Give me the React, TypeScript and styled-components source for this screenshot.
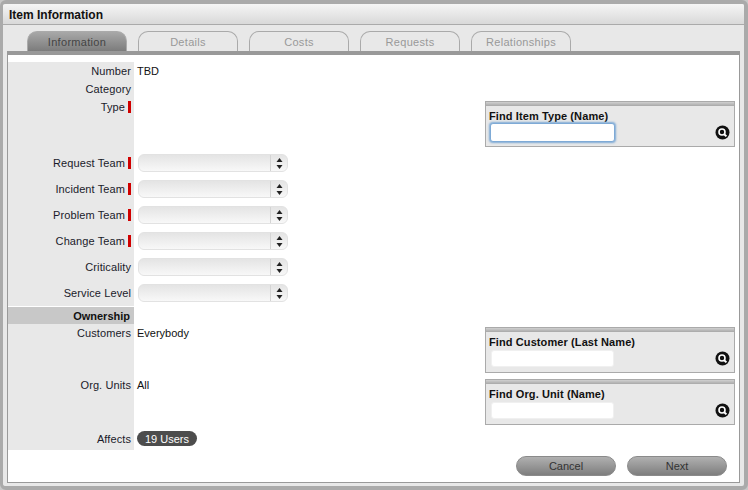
import React from "react";
import styled, { createGlobalStyle } from "styled-components";

const GlobalStyle = createGlobalStyle`
  html, body {
    margin: 0;
    padding: 0;
    background: #c8c8c8;
  }
  * {
    box-sizing: border-box;
  }
`;

const Win = styled.div`
  width: 748px;
  height: 490px;
  display: flex;
  flex-direction: column;
  background: #e8e8e8;
  border: solid #aaaaaa;
  border-width: 4px 4px 4px 3px;
  border-radius: 6px;
  overflow: hidden;
  font-family: "Liberation Sans", Arial, sans-serif;
  font-size: 11px;
  color: #111;
`;

const TitleBar = styled.div`
  height: 21px;
  flex: none;
  display: flex;
  align-items: center;
  padding: 2px 0 0 6px;
  font-size: 12px;
  font-weight: bold;
  color: #111;
  background: linear-gradient(#f5f5f5, #d9d9d9);
  border-bottom: 1px solid #aaaaaa;
`;

const TabBar = styled.div`
  height: 26px;
  flex: none;
  display: flex;
  align-items: flex-end;
  gap: 11px;
  padding-left: 24px;
`;

const Tab = styled.div<{ $active?: boolean }>`
  width: 100px;
  height: 20px;
  display: flex;
  align-items: center;
  justify-content: center;
  letter-spacing: 0.3px;
  border-radius: 10px 10px 0 0;
  border: 1px solid #aaaaaa;
  border-bottom: none;
  color: ${(p) => (p.$active ? "#444" : "#999")};
  background: ${(p) => (p.$active ? "linear-gradient(#a8a8a8, #7c7c7c)" : "transparent")};
`;

const Panel = styled.div`
  margin-left: 4px;
  width: 733px;
  height: 432px;
  flex: none;
  display: flex;
  flex-direction: column;
  background: #fff;
  border: 1px solid #999999;
  border-top: 4px solid #999999;
  padding-top: 7px;
`;

const Row = styled.div<{ $height: number }>`
  display: flex;
  height: ${(p) => p.$height}px;
`;

const Label = styled.div<{ $center?: boolean }>`
  width: 126px;
  flex: none;
  display: flex;
  justify-content: flex-end;
  align-items: ${(p) => (p.$center ? "center" : "flex-start")};
  gap: 3px;
  padding-right: 3px;
  padding-top: ${(p) => (p.$center ? 0 : 3)}px;
  background: #e8e8e8;
  color: #1a1a2a;
  letter-spacing: 0.1px;
`;

const Required = styled.span`
  width: 3px;
  height: 12px;
  background: #d00000;
`;

const Value = styled.div`
  flex: 1;
  padding: 3px 0 0 3px;
  color: #111;
`;

const SectionBand = styled.div`
  width: 126px;
  height: 17px;
  margin-top: 1px;
  display: flex;
  align-items: center;
  justify-content: flex-end;
  padding-right: 4px;
  font-weight: bold;
  background: #c8c8c8;
`;

const SelectBox = styled.div`
  width: 150px;
  height: 18px;
  margin: 4px 0 0 4px;
  display: flex;
  justify-content: flex-end;
  border-radius: 6px;
  border: 1px solid #e2e2e2;
  background: linear-gradient(#e4e4e4, #f8f8f8);
`;

const SelectArrows = styled.div`
  width: 17px;
  display: flex;
  align-items: center;
  justify-content: center;
  border-left: 1px solid #d4d4d4;
`;

const FindBox = styled.div`
  width: 250px;
  height: 46px;
  margin: 3px 4px 0 0;
  flex: none;
  position: relative;
  background: #e8e8e8;
  border: 1px solid #aaaaaa;
  padding: 8px 4px 0 3px;
`;

const FindStripe = styled.div`
  position: absolute;
  top: 0;
  left: 0;
  right: 0;
  height: 4px;
  background: linear-gradient(#d0d0d0, #a8a8a8);
`;

const FindLabel = styled.div`
  font-weight: bold;
  line-height: 12px;
  letter-spacing: 0.1px;
`;

const FindFoot = styled.div`
  height: 19px;
  display: flex;
  justify-content: space-between;
  align-items: center;
  margin-top: 1px;
`;

const FindInput = styled.input<{ $focused?: boolean }>`
  width: ${(p) => (p.$focused ? 125 : 123)}px;
  height: ${(p) => (p.$focused ? 19 : 17)}px;
  margin: 0 0 0 ${(p) => (p.$focused ? 1 : 2)}px;
  padding: 0;
  outline: none;
  border-radius: 3px;
  background: #fff;
  border: 1px solid ${(p) => (p.$focused ? "#7eaad6" : "#f0f0f0")};
  box-shadow: ${(p) => (p.$focused ? "0 0 2px 1px #7eaad6" : "none")};
`;

const Footer = styled.div`
  flex: 1;
  display: flex;
  justify-content: flex-end;
  gap: 11px;
  padding: 6px 12px 0 0;
`;

const FootButton = styled.div`
  width: 100px;
  height: 20px;
  display: flex;
  align-items: center;
  justify-content: center;
  border-radius: 10px;
  color: #333;
  border: 1px solid #8a8a8a;
  background: linear-gradient(#b0b0b0, #7e7e7e);
`;

const Pill = styled.span`
  display: inline-flex;
  align-items: center;
  height: 15px;
  padding: 0 8px;
  border-radius: 8px;
  background: #4d4d4d;
  color: #fff;
`;

const TABS = ["Information", "Details", "Costs", "Requests", "Relationships"];

const SELECTS = [
  { name: "Request Team", required: true },
  { name: "Incident Team", required: true },
  { name: "Problem Team", required: true },
  { name: "Change Team", required: true },
  { name: "Criticality", required: false },
  { name: "Service Level", required: false },
];

function SearchIcon() {
  return (
    <svg width="15" height="15" viewBox="0 0 15 15">
      <circle cx="7.5" cy="7.5" r="7" fill="#111" />
      <circle cx="7" cy="7" r="3" fill="#111" stroke="#fff" strokeWidth="1.6" />
      <path d="M9.2 9.2 L11.4 11.4" stroke="#fff" strokeWidth="2" />
    </svg>
  );
}

function Find({ title, focused }: { title: string; focused?: boolean }) {
  return (
    <FindBox>
      <FindStripe />
      <FindLabel>{title}</FindLabel>
      <FindFoot>
        <FindInput $focused={focused} />
        <SearchIcon />
      </FindFoot>
    </FindBox>
  );
}

export default function App() {
  return (
    <Win>
      <GlobalStyle />
      <TitleBar>Item Information</TitleBar>
      <TabBar>
        {TABS.map((t, i) => (
          <Tab key={t} $active={i === 0}>
            {t}
          </Tab>
        ))}
      </TabBar>
      <Panel>
        <Row $height={18}>
          <Label>Number</Label>
          <Value>TBD</Value>
        </Row>
        <Row $height={18}>
          <Label>Category</Label>
          <Value />
        </Row>
        <Row $height={52}>
          <Label>
            Type
            <Required />
          </Label>
          <Value />
          <Find title="Find Item Type (Name)" focused />
        </Row>
        {SELECTS.map((s) => (
          <Row $height={26} key={s.name}>
            <Label $center>
              {s.name}
              {s.required && <Required />}
            </Label>
            <div>
              <SelectBox>
                <SelectArrows>
                  <svg width="7" height="11" viewBox="0 0 7 11">
                    <path d="M3.5 0 L6.5 4 L0.5 4 Z M3.5 11 L0.5 7 L6.5 7 Z" fill="#222" />
                  </svg>
                </SelectArrows>
              </SelectBox>
            </div>
          </Row>
        ))}
        <Row $height={18}>
          <SectionBand>Ownership</SectionBand>
        </Row>
        <Row $height={52}>
          <Label>Customers</Label>
          <Value>Everybody</Value>
          <Find title="Find Customer (Last Name)" />
        </Row>
        <Row $height={52}>
          <Label>Org. Units</Label>
          <Value>All</Value>
          <Find title="Find Org. Unit (Name)" />
        </Row>
        <Row $height={22}>
          <Label $center>Affects</Label>
          <Value>
            <Pill>19 Users</Pill>
          </Value>
        </Row>
        <Footer>
          <FootButton>Cancel</FootButton>
          <FootButton>Next</FootButton>
        </Footer>
      </Panel>
    </Win>
  );
}
